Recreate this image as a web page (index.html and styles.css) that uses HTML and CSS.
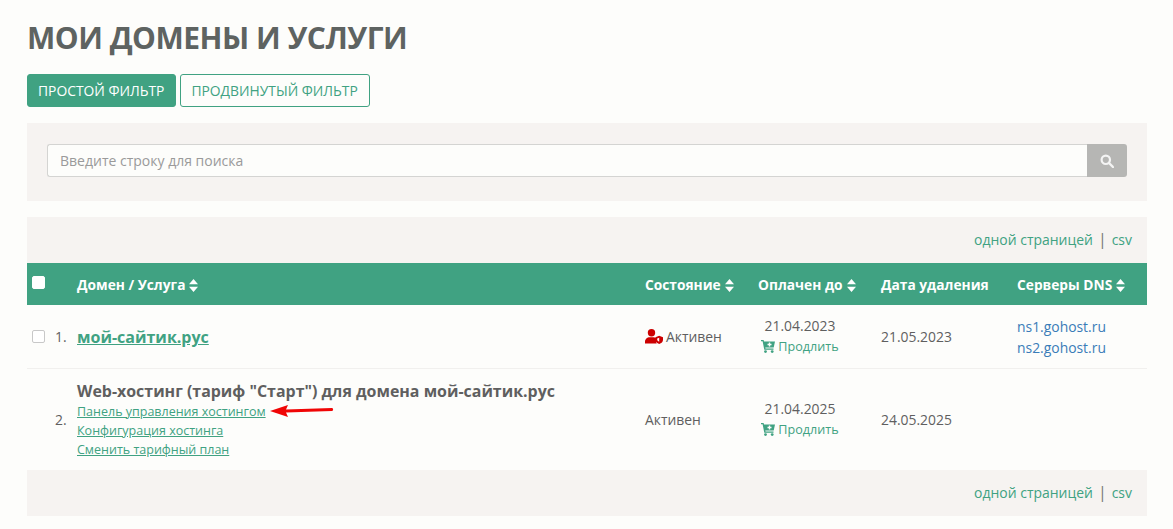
FILE: index.html
```html
<!DOCTYPE html>
<html lang="ru">
<head>
<meta charset="utf-8">
<title>Мои домены и услуги</title>
<link rel="stylesheet" href="styles.css">
</head>
<body>
<main class="page">
  <h1 class="title">МОИ ДОМЕНЫ И УСЛУГИ</h1>
  <div class="tabs">
    <a class="tab tab-active">ПРОСТОЙ ФИЛЬТР</a>
    <a class="tab tab-alt">ПРОДВИНУТЫЙ ФИЛЬТР</a>
  </div>
  <div class="search-box">
    <div class="search">
      <div class="search-input">Введите строку для поиска</div>
      <div class="search-btn">
        <svg width="14" height="14" viewBox="0 0 14 14"><circle cx="5.800" cy="5.800" r="4.200" fill="none" stroke="#f4f4f4" stroke-width="2.200"/><path d="M9 9l4 4" stroke="#f4f4f4" stroke-width="2.400" stroke-linecap="round"/></svg>
      </div>
    </div>
  </div>
  <div class="toolbar"><a class="tlink">одной страницей</a><span class="sep">|</span><a class="tlink">csv</a></div>
  <table class="grid">
    <colgroup><col class="c-check"><col class="c-num"><col class="c-name"><col class="c-state"><col class="c-paid"><col class="c-del"><col class="c-dns"></colgroup>
    <thead>
      <tr>
        <th class="cell-check"><span class="box box-head"></span></th>
        <th></th>
        <th>Домен / Услуга<svg class="sort" width="9" height="13" viewBox="0 0 9 13"><path d="M4.500 0L9 5.300H0zM4.500 13L0 7.700h9z" fill="#fff"/></svg></th>
        <th>Состояние<svg class="sort" width="9" height="13" viewBox="0 0 9 13"><path d="M4.500 0L9 5.300H0zM4.500 13L0 7.700h9z" fill="#fff"/></svg></th>
        <th>Оплачен до<svg class="sort" width="9" height="13" viewBox="0 0 9 13"><path d="M4.500 0L9 5.300H0zM4.500 13L0 7.700h9z" fill="#fff"/></svg></th>
        <th>Дата удаления</th>
        <th>Серверы DNS<svg class="sort" width="9" height="13" viewBox="0 0 9 13"><path d="M4.500 0L9 5.300H0zM4.500 13L0 7.700h9z" fill="#fff"/></svg></th>
      </tr>
    </thead>
    <tbody>
      <tr class="row-1">
        <td class="cell-check"><span class="box"></span></td>
        <td class="num">1.</td>
        <td class="shifted"><a class="domain">мой-сайтик.рус</a></td>
        <td class="state">
          <svg class="user" width="18" height="15" viewBox="0 0 18 15"><circle cx="6.500" cy="3.700" r="3.700" fill="#c00"/><path d="M0 14.500v-1.700C0 10 2.200 8.200 4.600 8.200h3.800c1 0 1.900.3 2.600.8v3.400c0 .8.300 1.500.8 2.100z" fill="#c00"/><path d="M14.200 6.800l3.800 1.500v2.700c0 1.900-1.600 3.300-3.800 4-2.200-.7-3.800-2.100-3.800-4V8.300z" fill="#c00"/><path d="M14.200 8.800v4c-1.200-.4-2-1.100-2-2.200V9.500z" fill="#fff"/></svg>Активен
        </td>
        <td class="paid"><div class="date">21.04.2023</div><a class="renew"><svg class="cart" width="14" height="13" viewBox="0 0 14 13"><path d="M0 0h2.600l.4 1.500h11l-1.300 6H4.300l.2 1h8v1.300H3.300L1.600 1.300H0z" fill="#40a282"/><circle cx="4.500" cy="11.600" r="1.400" fill="#40a282"/><circle cx="11.200" cy="11.600" r="1.400" fill="#40a282"/><path d="M7.800 2.500h1.400v1.300h1.300v1.400H9.200v1.300H7.800V5.200H6.500V3.800h1.300z" fill="#fdfdfb"/></svg>Продлить</a></td>
        <td>21.05.2023</td>
        <td class="dns shifted"><a>ns1.gohost.ru</a><a>ns2.gohost.ru</a></td>
      </tr>
      <tr class="row-2">
        <td></td>
        <td class="num">2.</td>
        <td class="service">
          <div class="service-name">Web-хостинг (тариф "Старт") для домена мой-сайтик.рус</div>
          <a class="slink slink-marked">Панель управления хостингом<svg class="arrow" width="64" height="12" viewBox="0 0 64 12"><path d="M0 6L18 0l-2 4.500L62 3c1.500 0 1.500 3 0 3L16 7.500 18 12z" fill="#f00505"/></svg></a>
          <a class="slink">Конфигурация хостинга</a>
          <a class="slink">Сменить тарифный план</a>
        </td>
        <td>Активен</td>
        <td class="paid"><div class="date">21.04.2025</div><a class="renew"><svg class="cart" width="14" height="13" viewBox="0 0 14 13"><path d="M0 0h2.600l.4 1.500h11l-1.300 6H4.300l.2 1h8v1.300H3.300L1.600 1.300H0z" fill="#40a282"/><circle cx="4.500" cy="11.600" r="1.400" fill="#40a282"/><circle cx="11.200" cy="11.600" r="1.400" fill="#40a282"/><path d="M7.800 2.500h1.400v1.300h1.300v1.400H9.200v1.300H7.800V5.200H6.500V3.800h1.300z" fill="#fdfdfb"/></svg>Продлить</a></td>
        <td>24.05.2025</td>
        <td></td>
      </tr>
    </tbody>
  </table>
  <div class="toolbar toolbar-bottom"><a class="tlink">одной страницей</a><span class="sep">|</span><a class="tlink">csv</a></div>
</main>
</body>
</html>
```
FILE: styles.css
```css
* { box-sizing: border-box; }
html, body { margin: 0; height: 100%; }
body {
  background: #fdfdfb;
  color: #5f5f5f;
  font-family: "Open Sans", sans-serif;
  font-size: 13.900px;
  overflow: hidden;
}
.page { padding: 16px 26px 0 27px; }
.title {
  margin: 0;
  color: #5e6361;
  font-size: 30px;
  font-weight: 700;
  letter-spacing: -0.500px;
  line-height: 44px;
}
.tabs { display: flex; gap: 4px; margin-top: 14px; }
.tab {
  height: 33px;
  padding: 0 10px;
  border: 1px solid #40a282;
  border-radius: 3px;
  color: #40a282;
  font-size: 13.850px;
  line-height: 31px;
}
.tab-active { padding-right: 11px; background: #40a282; color: #fff; }
.tab-alt { padding-right: 11px; }
.search-box {
  margin-top: 16px;
  height: 78px;
  padding: 21px 20px 0;
  background: #f6f3f1;
}
.search { display: flex; height: 33px; }
.search-input {
  flex: 1;
  padding-left: 12px;
  background: #fdfdfb;
  border: 1px solid #d4d4d2;
  border-right: 0;
  border-radius: 3px 0 0 3px;
  color: #9a9a9a;
  font-size: 14px;
  line-height: 31px;
}
.search-btn {
  display: flex;
  align-items: center;
  justify-content: center;
  width: 40px;
  background: #b6b6b4;
  border-radius: 0 3px 3px 0;
}
.toolbar {
  display: flex;
  justify-content: flex-end;
  align-items: center;
  gap: 5px;
  height: 46px;
  margin-top: 16px;
  padding: 0 15px 2px 0;
  background: #f6f3f1;
}
.toolbar-bottom { margin-top: 0; }
.tlink { color: #40a282; font-size: 13.960px; }
.sep { color: #777; font-size: 16px; }
.grid {
  width: 100%;
  border-collapse: collapse;
  table-layout: fixed;
}
.c-check { width: 28px; }
.c-num { width: 22px; }
.c-name { width: 568px; }
.c-state { width: 113px; }
.c-paid { width: 123px; }
.c-del { width: 136px; }
.grid th {
  height: 42px;
  padding: 1px 0 0;
  background: #40a282;
  color: #fff;
  font-size: 13.750px;
  font-weight: 700;
  text-align: left;
}
.grid td { padding: 0; vertical-align: middle; }
.grid .paid { padding-right: 39px; text-align: center; }
.grid .shifted { padding-top: 2px; }
.row-1 { height: 63px; border-bottom: 1px solid #f1f0ee; }
.row-2 { height: 102px; }
.grid .cell-check { padding-left: 5px; }
.box {
  display: block;
  width: 13px;
  height: 13px;
  border: 1px solid #c8c8c8;
  border-radius: 2px;
  background: #fff;
}
.box-head { border-color: #fff; position: relative; top: -2px; }
.sort { margin-left: 4px; vertical-align: -2px; }
.domain {
  color: #40a282;
  font-size: 16px;
  font-weight: 700;
  text-decoration: underline;
}
.state { white-space: nowrap; }
.user { margin-right: 3px; vertical-align: -2px; }
.date { line-height: 21px; margin-bottom: 1px; }
.renew {
  display: block;
  color: #40a282;
  font-size: 12.600px;
  line-height: 20px;
}
.cart { margin-right: 3px; vertical-align: -2px; }
.dns a { display: block; color: #3a7cb8; line-height: 21px; }
.service-name { font-size: 15.950px; font-weight: 700; line-height: 22px; }
.slink {
  display: block;
  color: #40a282;
  font-size: 12.500px;
  line-height: 19px;
  text-decoration: underline;
}
.slink-marked { position: relative; width: max-content; }
.arrow { position: absolute; left: 100%; top: 3px; margin-left: 4px; }
```
